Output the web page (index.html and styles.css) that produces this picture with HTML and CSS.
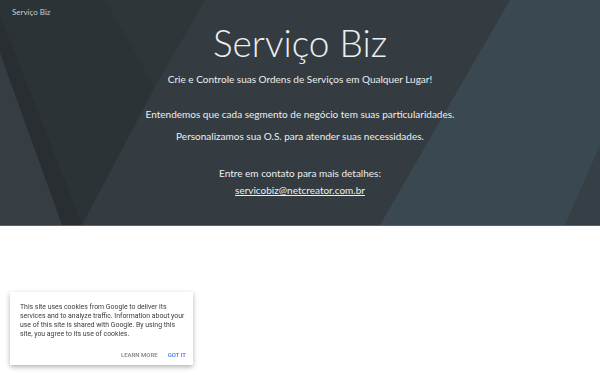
FILE: index.html
```html
<!DOCTYPE html>
<html lang="pt-BR">
<head>
  <meta charset="UTF-8">
  <meta name="viewport" content="width=device-width, initial-scale=1.0">
  <title>Serviço Biz</title>
  <link rel="stylesheet" href="styles.css">
</head>
<body>
  <header class="hero">
    <svg class="hero-bg" viewBox="0 0 600 225" preserveAspectRatio="none" aria-hidden="true">
      <rect width="600" height="225" fill="#343c41"/>
      <polygon points="510,0 600,0 600,225 380,225" fill="#3a4951"/>
      <polygon points="600,145 600,225 565,225" fill="#353f45"/>
      <polygon points="105,0 205,0 155,87" fill="#2f363a"/>
      <polygon points="0,0 105,0 155,87 82,225 0,225" fill="#2c3337"/>
      <polygon points="0,15 82,225 62,225 0,53" fill="#282e32"/>
      <polygon points="0,53 62,225 0,225" fill="#363e43"/>
    </svg>

    <div class="brand">Serviço Biz</div>

    <div class="hero-content">
      <h1>Serviço Biz</h1>
      <p class="tagline">Crie e Controle suas Ordens de Serviços em Qualquer Lugar!</p>
      <p class="desc first">Entendemos que cada segmento de negócio tem suas particularidades.</p>
      <p class="desc">Personalizamos sua O.S. para atender suas necessidades.</p>
      <p class="contact">
        Entre em contato para mais detalhes:<br>
        <a href="mailto:servicobiz@netcreator.com.br">servicobiz@netcreator.com.br</a>
      </p>
    </div>
  </header>

  <div class="cookie-bar">
    <p>This site uses cookies from Google to deliver its services and to analyze traffic. Information about your use of this site is shared with Google. By using this site, you agree to its use of cookies.</p>
    <div class="cookie-actions">
      <a href="#" class="learn">Learn more</a>
      <a href="#" class="got">Got it</a>
    </div>
  </div>
</body>
</html>
```

FILE: styles.css
```css
body {
  margin: 0;
  font-family: 'Lato', sans-serif;
  background-color: #fff;
}
.hero {
  position: relative;
  height: 225px;
  border-bottom: 1px solid #59636a;
  color: #eceff0;
  overflow: hidden;
}
.hero-bg {
  position: absolute;
  top: 0;
  left: 0;
  width: 100%;
  height: 100%;
  z-index: 0;
}
.brand {
  position: relative;
  padding: 6px 12px 0;
  font-size: 8px;
  line-height: 12px;
  color: #c9cdd0;
}
.hero-content {
  position: relative;
  text-align: center;
}
.hero-content h1 {
  margin: 3px 0 0;
  font-size: 37px;
  line-height: 44px;
  font-weight: 300;
}
.hero-content p {
  margin: 0;
  font-size: 10px;
  line-height: 17px;
}
.hero-content .tagline {
  margin-top: 6px;
}
.hero-content .desc {
  margin-top: 5px;
}
.hero-content .desc.first {
  margin-top: 18px;
}
.hero-content .contact {
  margin-top: 20px;
}
.hero-content a {
  color: #eceff0;
  text-decoration: underline;
}
.cookie-bar {
  position: fixed;
  left: 10px;
  top: 292px;
  width: 166px;
  padding: 11px 7px 6px 10px;
  background-color: #fff;
  box-shadow: 0 2px 5px rgba(0, 0, 0, 0.3);
  font-family: 'Roboto', sans-serif;
}
.cookie-bar p {
  margin: 0;
  font-size: 6.9px;
  line-height: 9px;
  color: #3c3c3c;
}
.cookie-actions {
  display: flex;
  justify-content: flex-end;
  gap: 10px;
  margin-top: 11px;
}
.cookie-actions a {
  font-size: 6px;
  font-weight: 500;
  text-transform: uppercase;
  text-decoration: none;
  line-height: 9px;
}
.cookie-actions .learn {
  color: #808080;
}
.cookie-actions .got {
  color: #3b78e7;
}
```
